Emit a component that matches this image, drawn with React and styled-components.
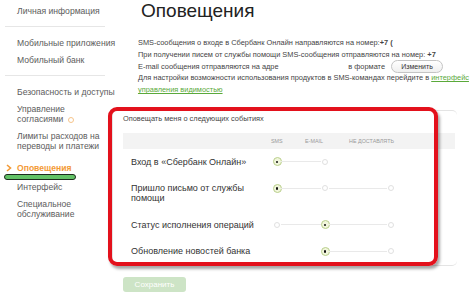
import React from 'react';
import styled, { createGlobalStyle } from 'styled-components';

const GlobalStyle = createGlobalStyle`
  html, body {
    margin: 0;
    padding: 0;
    background: #ffffff;
  }
  body {
    font-family: "Liberation Sans", Arial, sans-serif;
    width: 474px;
    height: 296px;
    overflow: hidden;
  }
`;

const Page = styled.div`
  display: flex;
  width: 474px;
  height: 296px;
  overflow: hidden;
`;

const Sidebar = styled.nav`
  position: relative;
  display: flex;
  flex-direction: column;
  width: 100px;
  flex-shrink: 0;
  padding: 6px 5px 0 5px;
`;

const NavItem = styled.div`
  position: relative;
  padding-left: 12px;
  font-size: 8.6px;
  line-height: 10px;
  color: ${(p) => (p.$active ? '#f39a36' : '#5c5c5c')};
  font-weight: ${(p) => (p.$active ? 'bold' : 'normal')};
  margin: ${(p) => (p.$active ? '5px 0 9px' : '0 0 7px')};
  white-space: nowrap;
`;

const Chevron = styled.svg`
  position: absolute;
  left: 1px;
  top: 1px;
`;

const Divider = styled.div`
  height: 1px;
  background: #e6e6e6;
  margin: 3px 0 11px;
`;

const ConsentDot = styled.span`
  display: inline-block;
  width: 4px;
  height: 4px;
  border: 1px solid #f6c48a;
  border-radius: 50%;
  margin-left: 2px;
  vertical-align: middle;
`;

const Marker = styled.div`
  position: absolute;
  left: 4px;
  top: 174px;
  width: 70px;
  height: 4px;
  background: #63c266;
  border: 1.5px solid #1d2b1e;
  border-radius: 4px;
`;

const Main = styled.main`
  position: relative;
  flex: 1;
`;

const Title = styled.h1`
  margin: 0 0 0 31px;
  font-size: 19px;
  line-height: 22px;
  font-weight: normal;
  color: #222222;
`;

const Info = styled.div`
  margin: 15px 0 0 28px;
  font-size: 7.4px;
  line-height: 11.8px;
  color: #444444;
`;

const InfoLine = styled.div`
  white-space: nowrap;
`;

const FormatLine = styled.div`
  display: flex;
  align-items: center;
  height: 11.8px;
  width: 305px;
  white-space: nowrap;
`;

const Spacer = styled.span`
  flex: 1;
`;

const ChangeButton = styled.button`
  margin-left: 6px;
  width: 52px;
  height: 13px;
  padding: 0;
  border: 1px solid #c4c4c4;
  border-radius: 7px;
  background: linear-gradient(#ffffff, #efefef);
  font-family: inherit;
  font-size: 7px;
  color: #333333;
`;

const Link = styled.a`
  color: #5aa93a;
  text-decoration: underline;
`;

const Panel = styled.section`
  margin: 14px 0 0 2px;
  width: 345px;
  padding: 3px 2px 0 10px;
  border: 1px solid #e4e4e4;
  border-right: none;
  border-radius: 5px;
  box-sizing: border-box;
`;

const Caption = styled.div`
  font-size: 7.4px;
  line-height: 10px;
  color: #444444;
  margin-bottom: 9px;
`;

const TableHead = styled.div`
  display: flex;
  align-items: center;
  height: 16px;
  padding-left: 148px;
  background: #f3f3f3;
  font-size: 5.4px;
  color: #9a9a9a;
  text-transform: uppercase;
`;

const HeadCell = styled.span`
  width: ${(p) => p.$w}px;
  flex-shrink: 0;
`;

const Row = styled.div`
  display: grid;
  grid-template-columns: 142px 8px 40px 8px 58px 8px;
  align-items: start;
  padding: 8px 0 8.5px 8px;
`;

const RowLabel = styled.div`
  font-size: 9px;
  line-height: 10px;
  color: #333333;
`;

const Cell = styled.div`
  height: 10px;
  display: flex;
  align-items: center;
  justify-content: center;
`;

const Connector = styled.div`
  width: 100%;
  height: 1px;
  background: #e9e9e9;
`;

const Radio = styled.span`
  flex-shrink: 0;
  box-sizing: border-box;
  width: ${(p) => (p.$on ? 9 : 6)}px;
  height: ${(p) => (p.$on ? 9 : 6)}px;
  border-radius: 50%;
  border: 1px solid ${(p) => (p.$on ? '#b9cf8c' : '#e0e0e0')};
  background: ${(p) => (p.$on ? '#f1f6dc' : '#ffffff')};
  display: flex;
  align-items: center;
  justify-content: center;
  &::after {
    content: '';
    display: ${(p) => (p.$on ? 'block' : 'none')};
    width: 2.5px;
    height: 2.5px;
    border-radius: 50%;
    background: #111111;
  }
`;

const SaveButton = styled.button`
  display: block;
  margin: 11px 0 0 13px;
  width: 63px;
  height: 15px;
  padding: 0;
  border: none;
  border-radius: 3px;
  background: #cde4c6;
  color: #ffffff;
  font-family: inherit;
  font-size: 8px;
`;

const Annotation = styled.div`
  position: absolute;
  left: -2px;
  top: 107px;
  width: 330px;
  height: 159px;
  box-sizing: border-box;
  border: 4px solid #e3111c;
  border-radius: 9px;
  box-shadow: 2px 3px 3px rgba(0, 0, 0, 0.35);
  pointer-events: none;
`;

const events = [
  { label: 'Вход в «Сбербанк Онлайн»', options: ['on', 'off', null] },
  { label: <>Пришло письмо от службы<br />помощи</>, options: ['on', 'off', 'off'] },
  { label: 'Статус исполнения операций', options: ['off', 'on', 'off'] },
  { label: 'Обновление новостей банка', options: [null, 'on', 'off'] },
];

const EventRow = ({ label, options }) => (
  <Row>
    <RowLabel>{label}</RowLabel>
    {options.map((opt, i) => (
      <React.Fragment key={i}>
        <Cell>{opt ? <Radio $on={opt === 'on'} /> : null}</Cell>
        {i < options.length - 1 ? (
          <Cell>{opt && options[i + 1] ? <Connector /> : null}</Cell>
        ) : null}
      </React.Fragment>
    ))}
  </Row>
);

export default function App() {
  return (
    <Page>
      <GlobalStyle />
      <Sidebar>
        <NavItem>Личная информация</NavItem>
        <Divider />
        <NavItem>Мобильные приложения</NavItem>
        <NavItem>Мобильный банк</NavItem>
        <Divider />
        <NavItem>Безопасность и доступы</NavItem>
        <NavItem>Управление<br />согласиями <ConsentDot /></NavItem>
        <NavItem>Лимиты расходов на<br />переводы и платежи</NavItem>
        <NavItem $active>
          <Chevron width="6" height="8" viewBox="0 0 6 8">
            <path d="M1 1 L4.5 4 L1 7" fill="none" stroke="#f39a36" strokeWidth="1.6" />
          </Chevron>
          Оповещения
        </NavItem>
        <NavItem>Интерфейс</NavItem>
        <NavItem>Специальное<br />обслуживание</NavItem>
        <Marker />
      </Sidebar>

      <Main>
        <Title>Оповещения</Title>
        <Info>
          <InfoLine>SMS-сообщения о входе в Сбербанк Онлайн направляются на номер:<b>+7 (</b></InfoLine>
          <InfoLine>При получении писем от службы помощи SMS-сообщения отправляются на номер: <b>+7</b></InfoLine>
          <FormatLine>
            E-mail сообщения отправляются на адре
            <Spacer />
            в формате
            <ChangeButton>Изменить</ChangeButton>
          </FormatLine>
          <InfoLine>Для настройки возможности использования продуктов в SMS-командах перейдите в <Link>интерфейс</Link></InfoLine>
          <InfoLine><Link>управления видимостью</Link></InfoLine>
        </Info>

        <Panel>
          <Caption>Оповещать меня о следующих событиях</Caption>
          <TableHead>
            <HeadCell $w={34}>SMS</HeadCell>
            <HeadCell $w={44}>E-mail</HeadCell>
            <HeadCell $w={60}>Не доставлять</HeadCell>
          </TableHead>
          {events.map((ev, i) => (
            <EventRow key={i} label={ev.label} options={ev.options} />
          ))}
        </Panel>

        <SaveButton>Сохранить</SaveButton>
        <Annotation />
      </Main>
    </Page>
  );
}
